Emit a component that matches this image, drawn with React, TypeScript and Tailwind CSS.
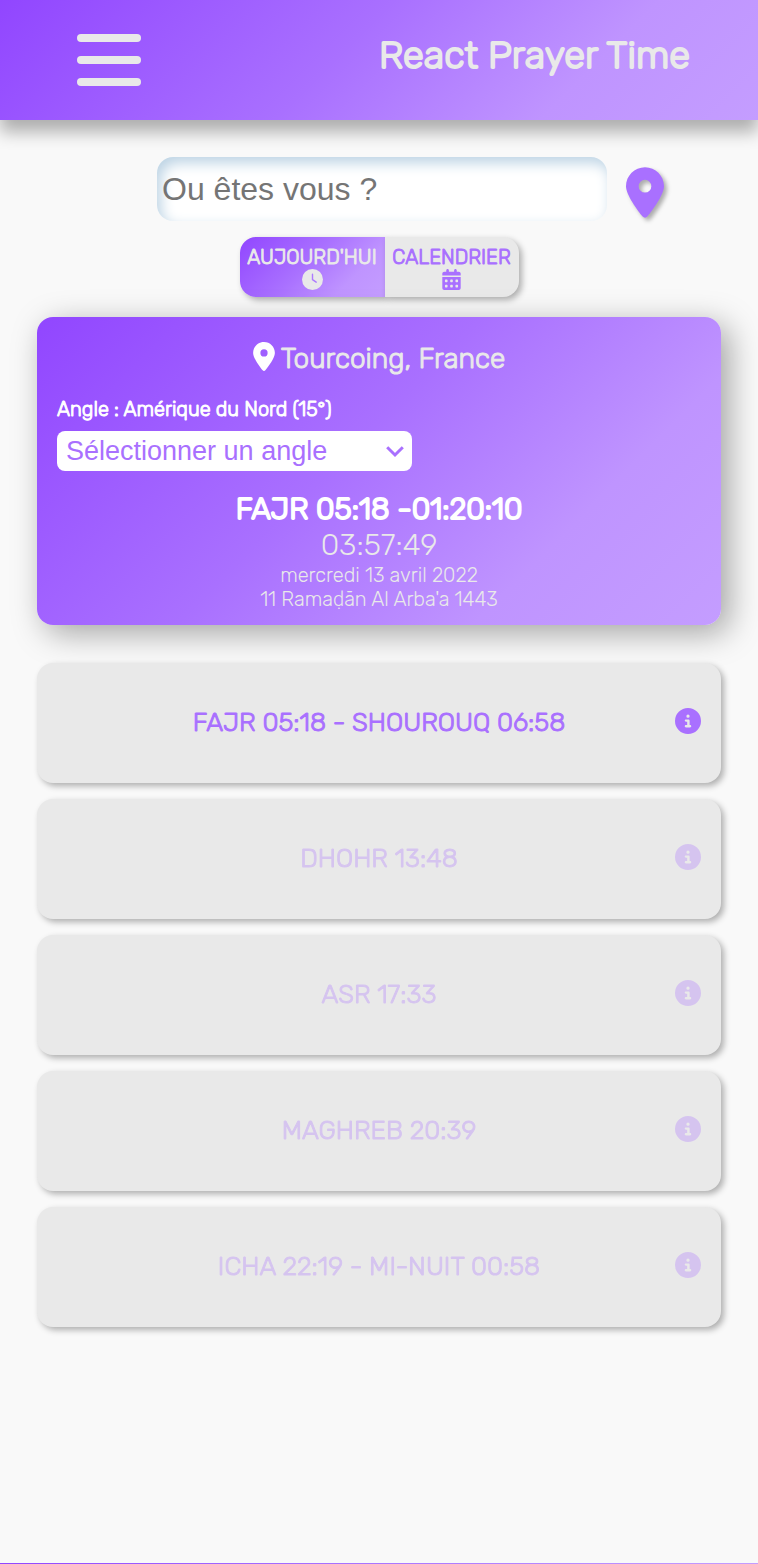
import { useState } from "react";
import { FaCalendarDays, FaCircleInfo, FaLocationDot } from "react-icons/fa6";

const prayers = [
  { label: "FAJR 05:18 - SHOUROUQ 06:58", active: true },
  { label: "DHOHR 13:48", active: false },
  { label: "ASR 17:33", active: false },
  { label: "MAGHREB 20:39", active: false },
  { label: "ICHA 22:19 - MI-NUIT 00:58", active: false },
];

function Header() {
  return (
    <header className="flex h-[120px] items-center justify-between bg-linear-[135deg,#9146ff_0%,#a970ff_45%,#bf94ff_75%,#c49dff_100%] pr-[68px] pl-[77px] shadow-[0_12px_16px_rgba(0,0,0,0.3)]">
      <button type="button" aria-label="Menu" className="text-[#e9e9e9]">
        <svg viewBox="0 0 64 52" className="h-[52px] w-16" fill="currentColor" aria-hidden="true">
          <rect width="64" height="8" rx="4" />
          <rect y="22" width="64" height="8" rx="4" />
          <rect y="44" width="64" height="8" rx="4" />
        </svg>
      </button>
      <h1 className="pb-2.5 text-[38px] leading-12 text-[#e9e9e9] [-webkit-text-stroke:2px]">React Prayer Time</h1>
    </header>
  );
}

function SearchBar() {
  return (
    <form className="flex items-center justify-center gap-[19px] pl-[63px]" onSubmit={(e) => e.preventDefault()}>
      <input
        type="text"
        aria-label="Ville"
        placeholder="Ou êtes vous ?"
        className="h-16 w-[450px] min-w-0 rounded-2xl bg-white px-[5px] font-[Liberation_Sans,Arial,sans-serif] text-[32px] text-gray-800 shadow-[inset_4px_6px_14px_#bcd3e4] outline-none placeholder:text-[#757575]"
      />
      <button type="button" aria-label="Me localiser" className="mt-1.5 text-[#a970ff] drop-shadow-[3px_3px_2px_rgba(0,0,0,0.3)]">
        <FaLocationDot className="h-[51px] w-[38px]" />
      </button>
    </form>
  );
}

function ClockIcon() {
  return (
    <svg viewBox="0 0 21 21" className="size-[21px]" fill="none" aria-hidden="true">
      <circle cx="10.5" cy="10.5" r="10.5" fill="currentColor" />
      <path d="M10.5 5.2 V10.7 L14.2 13.2" stroke="#ad7aff" strokeWidth="1.4" strokeLinecap="round" strokeLinejoin="round" />
    </svg>
  );
}

function ViewTabs() {
  return (
    <div className="flex justify-center">
      <div className="flex h-15 text-xl leading-6 [-webkit-text-stroke:1px]">
        <button type="button" className="flex w-[145px] flex-col items-center rounded-l-2xl bg-linear-[135deg,#9146ff_0%,#a970ff_45%,#bf94ff_75%,#c49dff_100%] pt-2 text-[#e9e9e9] shadow-[3px_3px_6px_rgba(0,0,0,0.3)]">
          AUJOURD'HUI
          <ClockIcon />
        </button>
        <button type="button" className="flex w-[134px] flex-col items-center rounded-r-2xl bg-[#e9e9e9] pt-2 text-[#a970ff] shadow-[3px_3px_6px_rgba(0,0,0,0.3)]">
          CALENDRIER
          <FaCalendarDays className="size-[21px]" />
        </button>
      </div>
    </div>
  );
}

function NextPrayer() {
  const [angle, setAngle] = useState("");
  return (
    <section className="rounded-2xl bg-linear-[135deg,#9146ff_0%,#a970ff_45%,#bf94ff_75%,#c49dff_100%] px-5 pt-[25px] pb-3.5 text-center text-[#e9e9e9] shadow-[8px_8px_32px_rgba(0,0,0,0.35)]">
      <h2 className="flex items-center justify-center gap-1.5 text-[28px] leading-8 [-webkit-text-stroke:1px]">
        <FaLocationDot className="mb-1 h-[29px] w-[22px] text-white" />
        Tourcoing, France
      </h2>
      <div className="mt-[22px] text-left text-white">
        <label htmlFor="angle" className="block text-xl leading-6 [-webkit-text-stroke:1px]">
          Angle : Amérique du Nord (15°)
        </label>
        <div className="relative mt-2.5 w-[355px] max-w-full">
          <select
            id="angle"
            value={angle}
            onChange={(e) => setAngle(e.target.value)}
            className="h-10 w-full appearance-none rounded-lg bg-white px-[9px] font-[Liberation_Sans,Arial,sans-serif] text-[27px] leading-8 text-[#a970ff] outline-none"
          >
            <option value="">Sélectionner un angle</option>
            <option value="15">Amérique du Nord (15°)</option>
          </select>
          <svg viewBox="0 0 18 12" className="pointer-events-none absolute top-[15px] right-2 h-3 w-[18px]" fill="none" stroke="#a970ff" strokeWidth="3" aria-hidden="true">
            <path d="M1.2 1.2 L9 9 L16.8 1.2" />
          </svg>
        </div>
      </div>
      <p className="mt-5 text-[30px] leading-9 text-white [-webkit-text-stroke:2px]">FAJR 05:18 -01:20:10</p>
      <p className="text-[30px] leading-9">03:57:49</p>
      <p className="text-xl leading-6">mercredi 13 avril 2022</p>
      <p className="text-xl leading-6">11 Ramaḍān Al Arba'a 1443</p>
    </section>
  );
}

function PrayerCard({ label, active }: { label: string; active: boolean }) {
  return (
    <li className="rounded-2xl bg-[#e9e9e9] shadow-[3px_3px_6px_rgba(0,0,0,0.3)]">
      <div
        className={
          active
            ? "grid h-[120px] grid-cols-[26px_1fr_26px] items-center px-5 text-[#a970ff]"
            : "grid h-[120px] grid-cols-[26px_1fr_26px] items-center px-5 text-[#a970ff] opacity-30"
        }
      >
        <span className="col-start-2 text-center text-[26px] leading-8 [-webkit-text-stroke:1px]">{label}</span>
        <button type="button" aria-label={"Détails " + label} className="flex pb-1">
          <FaCircleInfo className="size-[26px]" />
        </button>
      </div>
    </li>
  );
}

export default function App() {
  return (
    <div className="flex min-h-screen flex-col bg-[#f9f9f9] font-[Rubik,Roboto,sans-serif] font-light">
      <Header />
      <main className="flex grow flex-col px-[37px] pt-[37px] pb-10">
        <SearchBar />
        <div className="mt-4">
          <ViewTabs />
        </div>
        <div className="mt-5">
          <NextPrayer />
        </div>
        <ul className="mt-[38px] flex flex-col gap-4">
          {prayers.map((p) => (
            <PrayerCard key={p.label} label={p.label} active={p.active} />
          ))}
        </ul>
      </main>
      <footer className="h-px bg-linear-to-r from-[#9146ff] to-[#c49dff]" />
    </div>
  );
}
